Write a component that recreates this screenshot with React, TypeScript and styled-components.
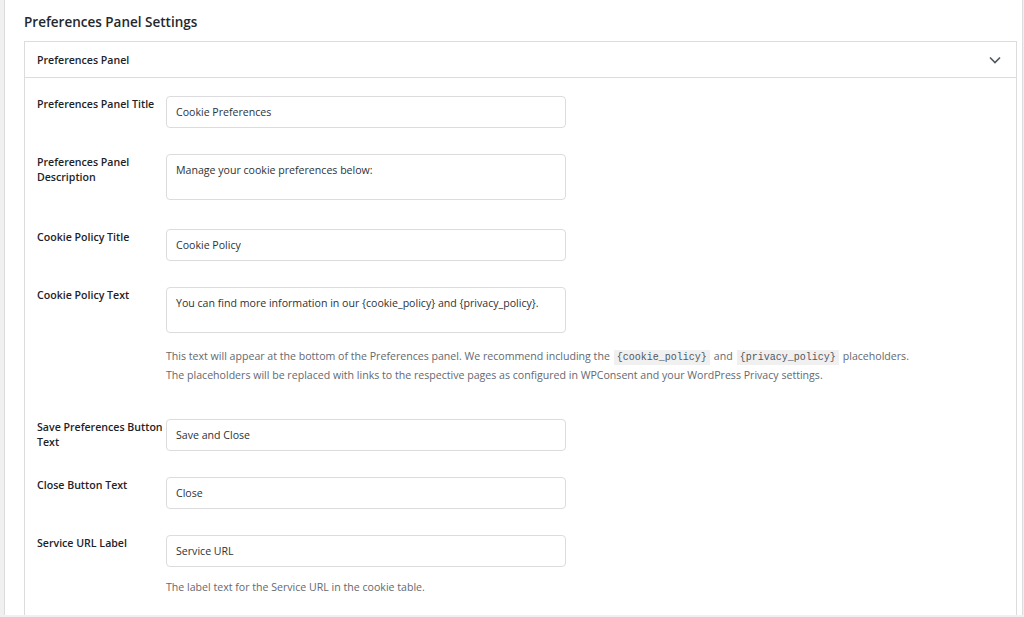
import React from 'react';
import styled, { createGlobalStyle } from 'styled-components';

const GlobalStyle = createGlobalStyle`
  html, body {
    margin: 0;
    padding: 0;
    background: #f0f0f1;
    height: 617px;
    overflow: hidden;
  }
  body {
    font-family: "Open Sans", "Noto Sans", Arial, sans-serif;
    color: #1d2327;
  }
`;

const Page = styled.div`
  padding: 0 1px 0 4px;
`;

const Card = styled.div`
  background: #fff;
  border-left: 1px solid #dcdcde;
  border-right: 1px solid #dcdcde;
  padding: 12px 5px 0 19px;
  height: 615px;
  box-sizing: border-box;
  overflow: hidden;
`;

const Heading = styled.h2`
  margin: 0 0 9px;
  font-size: 13.5px;
  line-height: 20px;
  font-weight: 600;
  color: #23282d;
`;

const Panel = styled.div`
  border: 1px solid #dcdcde;
`;

const PanelHeader = styled.div`
  display: flex;
  align-items: center;
  justify-content: space-between;
  height: 35px;
  padding: 0 15px 0 12px;
  border-bottom: 1px solid #dcdcde;
  font-size: 10.6px;
  font-weight: 600;
`;

const PanelBody = styled.div`
  padding: 18px 12px 0;
`;

const Row = styled.div`
  display: grid;
  grid-template-columns: 129px 400px;
  margin-bottom: 26px;
`;

const Label = styled.label`
  padding: 1px 2px 0 0;
  font-size: 10.6px;
  line-height: 15px;
  font-weight: 600;
  color: #1d2327;
`;

const Field = styled.div`
  display: flex;
  flex-direction: column;
`;

const TextInput = styled.input`
  box-sizing: border-box;
  width: 400px;
  height: 32px;
  margin: 0;
  padding: 0 9px;
  border: 1px solid #dcdcde;
  border-radius: 4px;
  font-family: inherit;
  font-size: 10.6px;
  color: #2c3338;
  background: #fff;
  outline: none;
`;

const TextArea = styled.textarea`
  box-sizing: border-box;
  width: 400px;
  height: 46px;
  margin: 0 0 3px;
  padding: 8px 9px;
  border: 1px solid #dcdcde;
  border-radius: 4px;
  font-family: inherit;
  font-size: 10.6px;
  line-height: 15px;
  color: #2c3338;
  resize: none;
  outline: none;
`;

const Help = styled.p`
  margin: 11px 0 8px;
  width: 800px;
  font-size: 10.6px;
  line-height: 19px;
  color: #646970;
`;

const Code = styled.code`
  margin: 0 4px;
  padding: 2px 3px;
  line-height: 1;
  background: #f0f0f1;
  font-family: "Liberation Mono", "DejaVu Sans Mono", monospace;
  font-size: 10px;
  color: #50575e;
`;

const Chevron = () => (
  <svg width="12" height="8" viewBox="0 0 12 8">
    <polyline points="1,1.5 6,6.5 11,1.5" fill="none" stroke="#50575e" strokeWidth="1.6" />
  </svg>
);

type FieldDef = {
  label: string;
  value: string;
  multi?: boolean;
};

const fields: FieldDef[] = [
  { label: 'Preferences Panel Title', value: 'Cookie Preferences' },
  { label: 'Preferences Panel Description', value: 'Manage your cookie preferences below:', multi: true },
  { label: 'Cookie Policy Title', value: 'Cookie Policy' },
  { label: 'Cookie Policy Text', value: 'You can find more information in our {cookie_policy} and {privacy_policy}.', multi: true },
  { label: 'Save Preferences Button Text', value: 'Save and Close' },
  { label: 'Close Button Text', value: 'Close' },
  { label: 'Service URL Label', value: 'Service URL' },
];

const helpFor = (label: string) => {
  if (label === 'Cookie Policy Text') {
    return (
      <Help>
        This text will appear at the bottom of the Preferences panel. We recommend including the
        <Code>{'{cookie_policy}'}</Code>and<Code>{'{privacy_policy}'}</Code>placeholders.
        <br />
        The placeholders will be replaced with links to the respective pages as configured in WPConsent and your WordPress Privacy settings.
      </Help>
    );
  }
  if (label === 'Service URL Label') {
    return <Help>The label text for the Service URL in the cookie table.</Help>;
  }
  return null;
};

function App() {
  return (
    <>
      <GlobalStyle />
      <Page>
        <Card>
          <Heading>Preferences Panel Settings</Heading>
          <Panel>
            <PanelHeader>
              <span>Preferences Panel</span>
              <Chevron />
            </PanelHeader>
            <PanelBody>
              {fields.map((f) => (
                <Row key={f.label}>
                  <Label>{f.label}</Label>
                  <Field>
                    {f.multi ? (
                      <TextArea defaultValue={f.value} />
                    ) : (
                      <TextInput type="text" defaultValue={f.value} />
                    )}
                    {helpFor(f.label)}
                  </Field>
                </Row>
              ))}
            </PanelBody>
          </Panel>
        </Card>
      </Page>
    </>
  );
}

export default App;
